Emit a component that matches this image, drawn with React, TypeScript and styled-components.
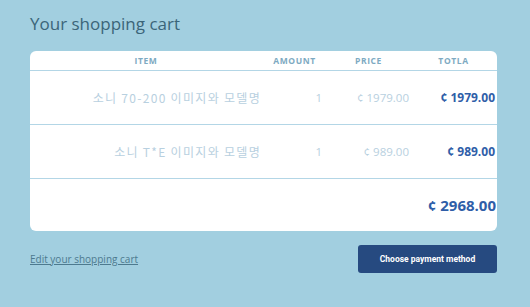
import React from 'react'
import styled, { createGlobalStyle } from 'styled-components'

const Global = createGlobalStyle`
  *, *::before, *::after {
    box-sizing: border-box;
  }
  html, body {
    margin: 0;
    padding: 0;
    background: #a2cfe0;
  }
  body {
    width: 530px;
    height: 307px;
    font-family: "Open Sans", "Noto Sans CJK KR", sans-serif;
  }
`

const Page = styled.div`
  padding: 12px 33px 0 30px;
`

const Title = styled.h1`
  margin: 0 0 15px;
  font-size: 17px;
  font-weight: 400;
  color: #3b6579;
  line-height: 24px;
`

const Card = styled.div`
  background: #fff;
  border-radius: 6px;
  overflow: hidden;
`

const Row = styled.div<{ $h: number }>`
  display: grid;
  grid-template-columns: 232px 65px 83px 1fr;
  align-items: center;
  height: ${p => p.$h}px;
  border-bottom: 1px solid #b3d6e6;
  &:last-child {
    border-bottom: none;
  }
`

const Head = styled.div`
  text-align: center;
  font-size: 8.5px;
  font-weight: 700;
  letter-spacing: 0.6px;
  color: #7eaac2;
`

const Name = styled.div`
  text-align: right;
  padding-right: 1px;
  font-size: 12px;
  letter-spacing: 1.3px;
  color: #b8d0e0;
  font-family: "Noto Sans CJK KR", sans-serif;
`

const Cell = styled.div<{ $bold?: boolean; $size?: number; $pad?: number; $full?: boolean }>`
  grid-column: ${p => (p.$full ? '1 / -1' : 'auto')};
  text-align: right;
  padding-right: ${p => p.$pad ?? 0}px;
  font-size: ${p => p.$size ?? 11.5}px;
  font-weight: ${p => (p.$bold ? 700 : 400)};
  color: ${p => (p.$bold ? '#2f5ea8' : '#b8d0e0')};
`

const Footer = styled.div`
  display: flex;
  justify-content: space-between;
  align-items: center;
  margin-top: 14px;
`

const EditLink = styled.a`
  font-size: 10px;
  color: #4d7a8f;
  text-decoration: underline;
  cursor: pointer;
`

const PayButton = styled.button`
  width: 139px;
  height: 28px;
  border: none;
  border-radius: 3px;
  background: #264a80;
  color: #fff;
  font-family: Roboto, "Liberation Sans", sans-serif;
  font-size: 8.5px;
  font-weight: 700;
`

const items = [
  { name: '소니 70-200 이미지와 모델명', qty: 1, price: '1979.00' },
  { name: '소니 T*E 이미지와 모델명', qty: 1, price: '989.00' },
]

export default function App() {
  return (
    <Page>
      <Global />
      <Title>Your shopping cart</Title>
      <Card>
        <Row $h={20}>
          <Head>ITEM</Head>
          <Head>AMOUNT</Head>
          <Head>PRICE</Head>
          <Head>TOTLA</Head>
        </Row>
        {items.map(it => (
          <Row $h={54} key={it.name}>
            <Name>{it.name}</Name>
            <Cell $pad={5}>{it.qty}</Cell>
            <Cell $pad={1}>¢ {it.price}</Cell>
            <Cell $bold $size={12} $pad={2}>¢ {it.price}</Cell>
          </Row>
        ))}
        <Row $h={52}>
          <Cell $full $bold $size={15} $pad={1}>¢ 2968.00</Cell>
        </Row>
      </Card>
      <Footer>
        <EditLink>Edit your shopping cart</EditLink>
        <PayButton>Choose payment method</PayButton>
      </Footer>
    </Page>
  )
}
